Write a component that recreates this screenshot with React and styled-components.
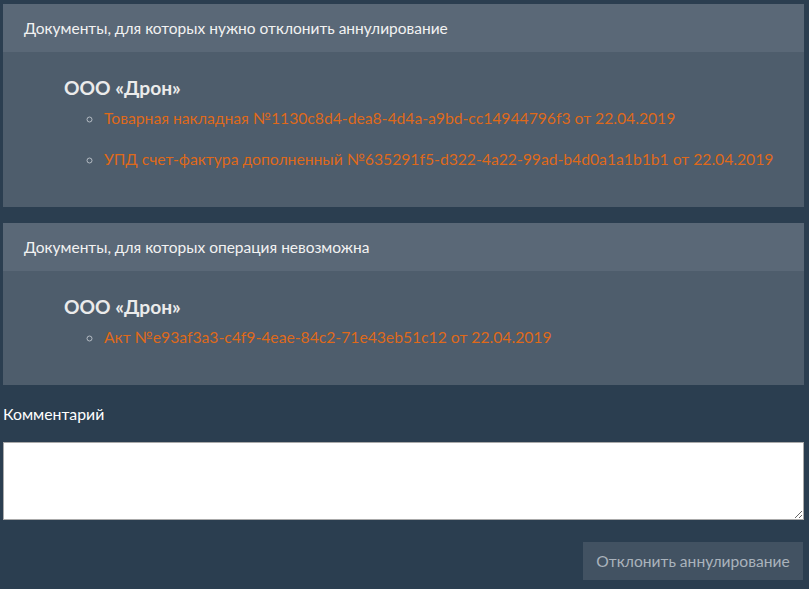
import React from 'react'
import styled, { createGlobalStyle } from 'styled-components'

const GlobalStyle = createGlobalStyle`
    html, body {
        margin:0;
        padding:0;
        background:#2b3e50;
    }
    body{
        font-family:Lato, "Open Sans", sans-serif;
        font-size:16px;
        color:#ebebeb;
    }
`

const groups = [
    {
        title: 'Документы, для которых нужно отклонить аннулирование',
        org: 'ООО «Дрон»',
        docs: [
            'Товарная накладная №1130c8d4-dea8-4d4a-a9bd-cc14944796f3 от 22.04.2019',
            'УПД счет-фактура дополненный №635291f5-d322-4a22-99ad-b4d0a1a1b1b1 от 22.04.2019',
        ],
    },
    {
        title: 'Документы, для которых операция невозможна',
        org: 'ООО «Дрон»',
        docs: [
            'Акт №e93af3a3-c4f9-4eae-84c2-71e43eb51c12 от 22.04.2019',
        ],
    },
]

function DocPanel({ group }) {
    return (
        <Panel>
            <PanelHeading>{group.title}</PanelHeading>
            <PanelBody>
                <OrgName>{group.org}</OrgName>
                <DocList>
                    {group.docs.map((doc) => (
                        <DocItem key={doc}>
                            <DocLink href="#">{doc}</DocLink>
                        </DocItem>
                    ))}
                </DocList>
            </PanelBody>
        </Panel>
    )
}

function App() {
    return (
        <>
            <GlobalStyle />
            <Page>
                {groups.map((g) => (
                    <DocPanel key={g.title} group={g} />
                ))}
                <CommentLabel>Комментарий</CommentLabel>
                <CommentBox rows={4} />
                <Actions>
                    <RejectButton disabled>Отклонить аннулирование</RejectButton>
                </Actions>
            </Page>
        </>
    )
}

export default App

const Page = styled.div`
    padding:4px 5px 9px 3px;
    display:flex;
    flex-direction:column;
`
const Panel = styled.div`
    background:#4e5d6c;
    margin-bottom:16px;
`
const PanelHeading = styled.div`
    background:#5a6877;
    height:48px;
    display:flex;
    align-items:center;
    padding:0 21px;
    font-size:15.5px;
    color:#f2f2f2;
`
const PanelBody = styled.div`
    padding:25px 10px 0 61px;
    display:flex;
    flex-direction:column;
`
const OrgName = styled.h4`
    margin:0;
    font-size:19.2px;
    font-weight:700;
    line-height:22px;
    color:#ebebeb;
`
const DocList = styled.ul`
    list-style:circle;
    margin:8px 0 0 0;
    padding:0 0 18px 40px;
    color:#b5bcc4;
`
const DocItem = styled.li`
    line-height:21px;
    margin-bottom:19px;
    white-space:nowrap;
`
const DocLink = styled.a`
    color:#df691a;
    text-decoration:none;
    font-size:15.7px;
`
const CommentLabel = styled.label`
    display:block;
    margin-top:3px;
    line-height:20px;
    font-size:15.8px;
    color:#ffffff;
`
const CommentBox = styled.textarea`
    margin-top:18px;
    height:78px;
    box-sizing:border-box;
    width:100%;
    border:1px solid #aaaaaa;
    background:#ffffff;
    resize:both;
    font-family:inherit;
`
const Actions = styled.div`
    display:flex;
    justify-content:flex-end;
    margin-top:22px;
`
const RejectButton = styled.button`
    width:220px;
    height:38px;
    margin-right:1px;
    border:none;
    border-radius:0;
    background:#425262;
    color:#aab3bc;
    font-family:Lato, "Open Sans", sans-serif;
    font-size:15.6px;
`
